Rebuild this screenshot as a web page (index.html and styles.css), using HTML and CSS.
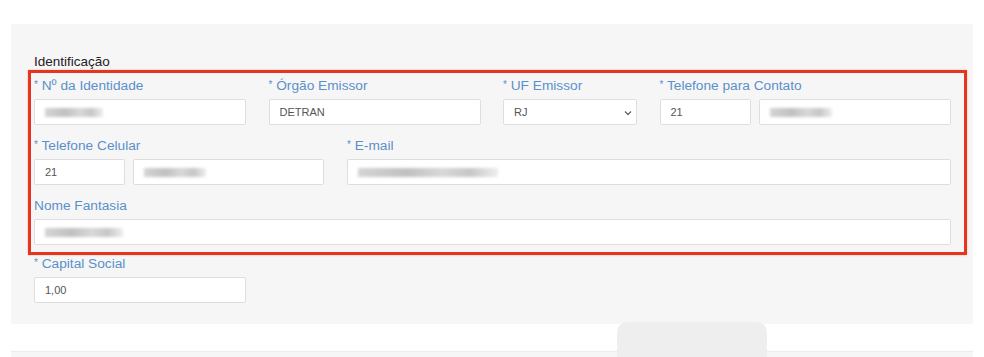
FILE: index.html
```html
<!DOCTYPE html>
<html>
<head>
  <meta name="viewport" content="width=device-width, initial-scale=1.0">
  <link rel="stylesheet" href="styles.css">
</head>
<body>
  <div class="panel">
    <div class="section-title">Identificação</div>

    <div class="highlight">
      <div class="row row-ident">
        <div class="field">
          <label><span class="req">*</span> Nº da Identidade</label>
          <div class="input"><span class="blur blur-id"></span></div>
        </div>
        <div class="field">
          <label><span class="req">*</span> Órgão Emissor</label>
          <div class="input">DETRAN</div>
        </div>
        <div class="field">
          <label><span class="req">*</span> UF Emissor</label>
          <div class="input select">
            RJ
            <svg class="chevron" width="8" height="6" viewBox="0 0 8 6"><path d="M1 1.5 L4 4.5 L7 1.5" fill="none" stroke="#666" stroke-width="1.3"/></svg>
          </div>
        </div>
        <div class="field">
          <label><span class="req">*</span> Telefone para Contato</label>
          <div class="phone">
            <div class="input">21</div>
            <div class="input"><span class="blur blur-phone"></span></div>
          </div>
        </div>
      </div>

      <div class="row row-contact">
        <div class="field">
          <label><span class="req">*</span> Telefone Celular</label>
          <div class="phone">
            <div class="input">21</div>
            <div class="input"><span class="blur blur-phone"></span></div>
          </div>
        </div>
        <div class="field">
          <label><span class="req">*</span> E-mail</label>
          <div class="input"><span class="blur blur-email"></span></div>
        </div>
      </div>

      <div class="row row-full">
        <div class="field">
          <label>Nome Fantasia</label>
          <div class="input"><span class="blur blur-name"></span></div>
        </div>
      </div>
    </div>

    <div class="field field-capital">
      <label><span class="req">*</span> Capital Social</label>
      <div class="input">1,00</div>
    </div>
  </div>

  <div class="panel-next"></div>
  <div class="floating-tab"></div>
</body>
</html>
```

FILE: styles.css
```css
body {
  margin: 0;
  padding: 0;
  background: #fff;
  font-family: "Liberation Sans", Arial, sans-serif;
  position: relative;
  height: 357px;
  overflow: hidden;
}

.panel {
  margin: 24px 11px 0 11px;
  padding: 30px 6px 21px 17px;
  background: #f7f6f7;
}

.section-title {
  font-size: 13.5px;
  line-height: 16px;
  color: #222;
  padding-left: 6px;
}

.highlight {
  border: 3px solid #e6351f;
  box-shadow: 0 0 2px rgba(230, 53, 31, 0.35);
  padding: 4px 13px 7px 3px;
}

.row {
  display: grid;
  column-gap: 22.5px;
}

.row + .row {
  margin-top: 12px;
}

.row-ident {
  grid-template-columns: 212px 212px 134px 1fr;
}

.row-contact {
  grid-template-columns: 290px 1fr;
  column-gap: 23px;
}

.row-full {
  grid-template-columns: 1fr;
}

.field label {
  display: block;
  height: 18px;
  font-size: 13.7px;
  line-height: 18px;
  color: #5a90c9;
  margin-bottom: 4px;
  white-space: nowrap;
}

.field label .req {
  font-size: 10px;
  position: relative;
  top: -2px;
}

.input {
  box-sizing: border-box;
  height: 26px;
  background: #fff;
  border: 1px solid #dedede;
  border-radius: 2px;
  padding: 0 10px;
  font-size: 11px;
  line-height: 24px;
  color: #555;
  position: relative;
  display: flex;
  align-items: center;
}

.select .chevron {
  position: absolute;
  right: 4px;
  top: 10px;
}

.phone {
  display: grid;
  grid-template-columns: 91px 1fr;
  column-gap: 8px;
}

.blur {
  display: inline-block;
  height: 9px;
  background: linear-gradient(90deg, #d4d4d4, #c0c0c0 35%, #d8d8d8 60%, #c6c6c6 80%, #eeeeee);
  filter: blur(1.5px);
}

.blur-id {
  width: 58px;
}

.blur-phone {
  width: 62px;
}

.blur-email {
  width: 140px;
}

.blur-name {
  width: 78px;
}

.field-capital {
  width: 212px;
  margin-left: 6px;
}

.panel-next {
  margin: 27px 11px 0 11px;
  height: 10px;
  background: #f7f6f7;
  border-top: 1px solid #ececec;
}

.floating-tab {
  position: absolute;
  left: 617px;
  top: 322px;
  width: 150px;
  height: 50px;
  background: #eeeeee;
  border-radius: 10px;
}
```
